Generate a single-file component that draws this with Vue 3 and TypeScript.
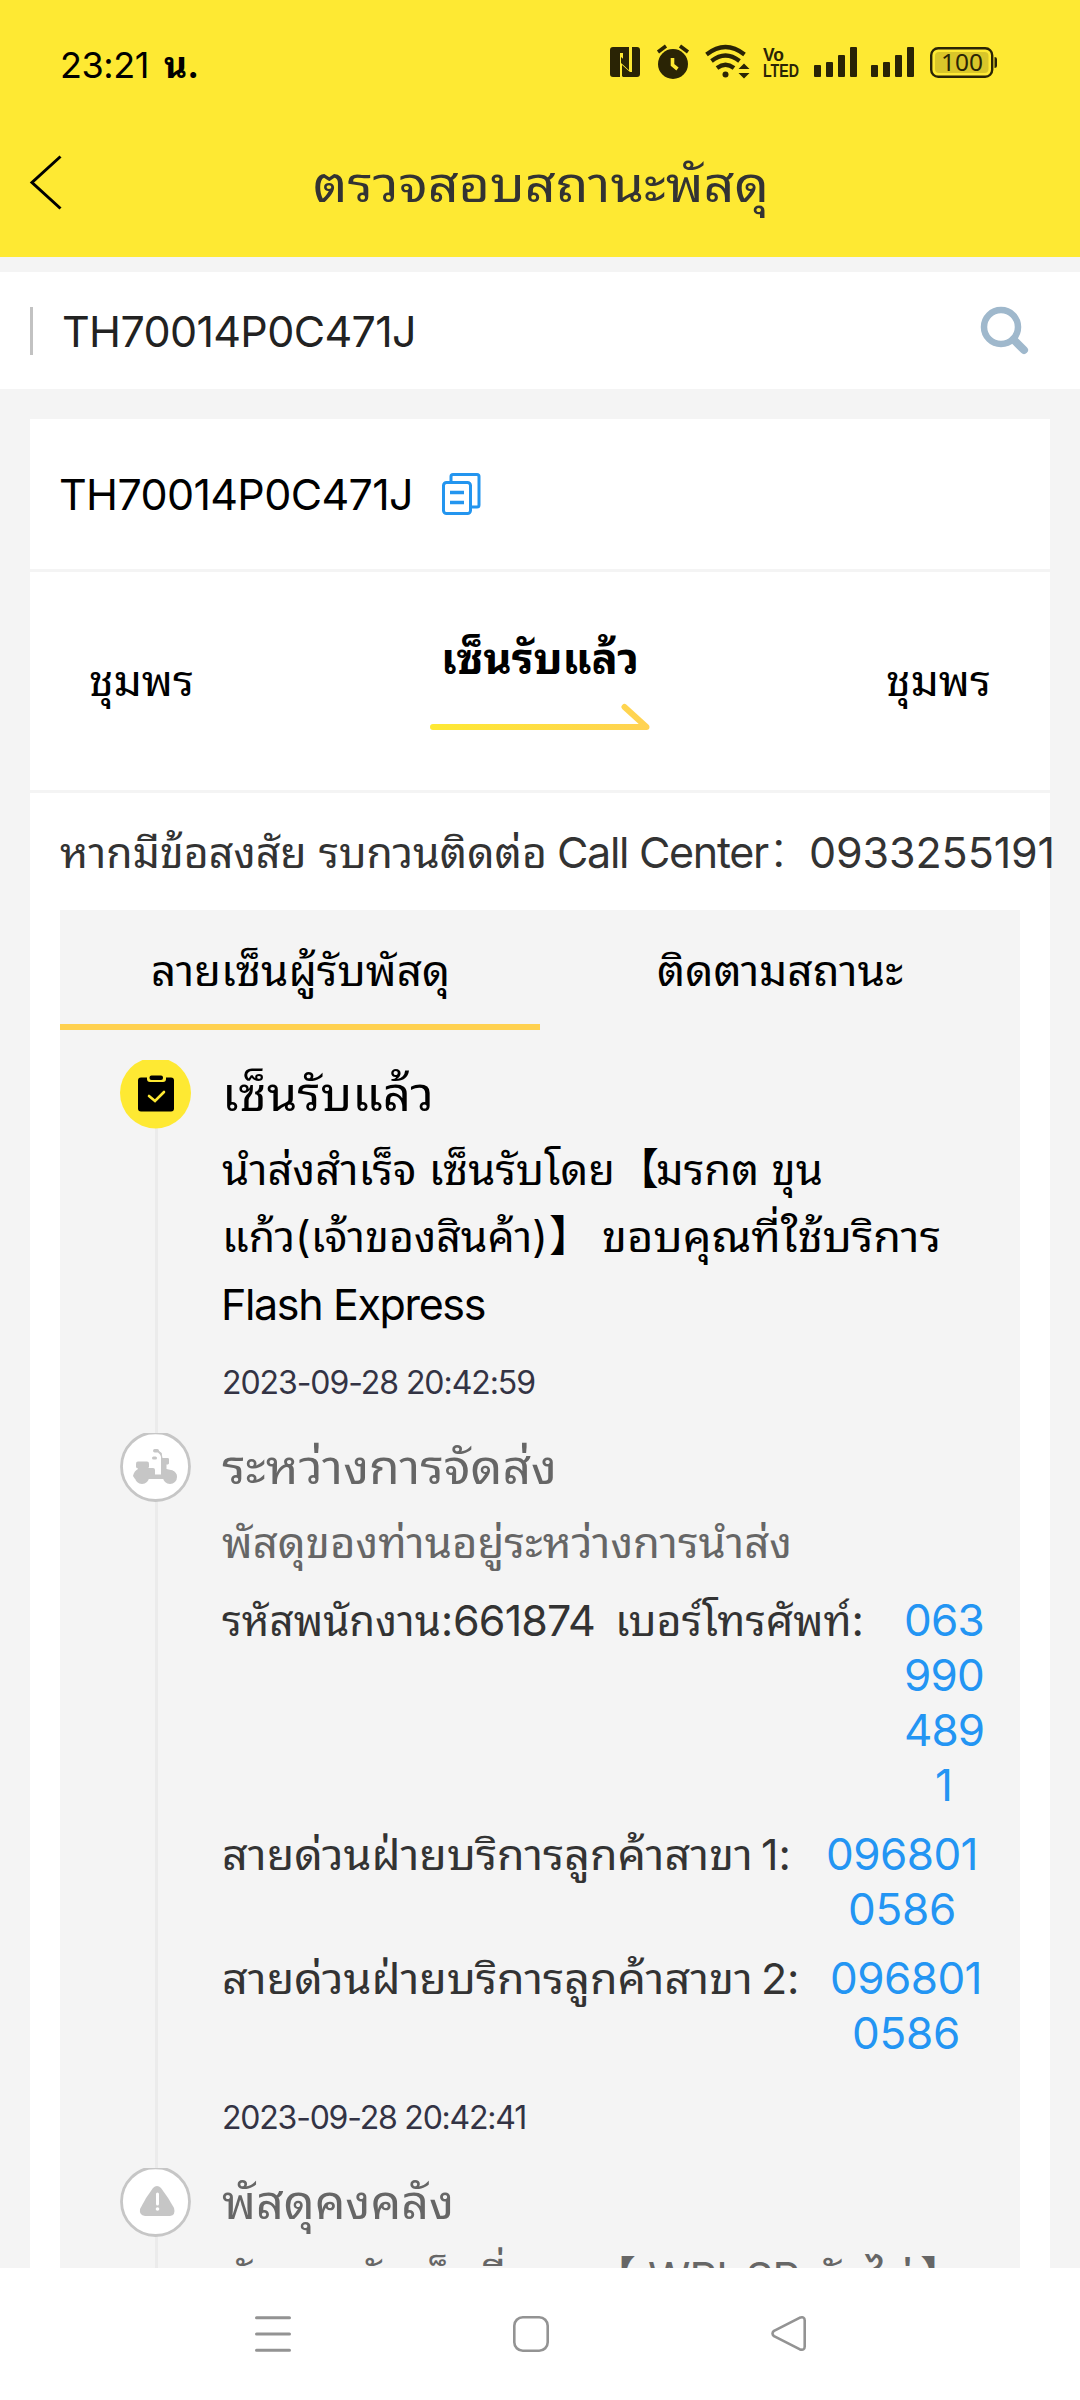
<script setup lang="ts">
interface Segment {
  text: string
  width: number
  gap?: number
}

interface Contact {
  label: Segment[]
  phone: Segment[]
  phoneGap: number
  phoneWidth: number
}

interface Step {
  kind: 'signed' | 'delivering' | 'warehouse'
  height: number
  title: Segment
  lines: Segment[][]
  contacts: Contact[]
  time?: Segment
}

// Makes the advance of an element equal the given width: Thai text is
// stretched, other text is tracked.
const vFit = {
  mounted(el: HTMLElement, binding: { value: number }) {
    el.style.letterSpacing = '0px'
    const natural = el.getBoundingClientRect().width
    if (/[\u0e00-\u0e7f]/.test(el.textContent ?? '')) {
      el.style.width = `${binding.value}px`
      el.style.transform = `scaleX(${binding.value / natural})`
      return
    }
    el.style.letterSpacing = '1px'
    const perPixel = el.getBoundingClientRect().width - natural
    el.style.letterSpacing = perPixel > 0 ? `${(binding.value - natural) / perPixel}px` : '0px'
  },
}

const trackingNo = 'TH70014P0C471J'

const steps: Step[] = [
  {
    kind: 'signed',
    height: 373,
    title: { text: 'เซ็นรับแล้ว', width: 212 },
    lines: [
      [
        { text: 'นำส่งสำเร็จ เซ็นรับโดย', width: 393 },
        { text: '【', width: 43, gap: 1 },
        { text: 'มรกต ขุน', width: 167, gap: -3 },
      ],
      [
        { text: 'แก้ว(เจ้าของสินค้า)', width: 326 },
        { text: '】', width: 43, gap: 1 },
        { text: 'ขอบคุณที่ใช้บริการ', width: 339, gap: 10 },
      ],
      [{ text: 'Flash Express', width: 264, gap: -1 }],
    ],
    contacts: [],
    time: { text: '2023-09-28 20:42:59', width: 313 },
  },
  {
    kind: 'delivering',
    height: 735,
    title: { text: 'ระหว่างการจัดส่ง', width: 335 },
    lines: [[{ text: 'พัสดุของท่านอยู่ระหว่างการนำส่ง', width: 570 }]],
    contacts: [
      {
        label: [
          { text: 'รหัสพนักงาน:', width: 231 },
          { text: '661874', width: 142 },
          { text: 'เบอร์โทรศัพท์:', width: 249, gap: 20 },
        ],
        phoneGap: 27,
        phoneWidth: 106,
        phone: [
          { text: '063', width: 80 },
          { text: '990', width: 80 },
          { text: '489', width: 80 },
          { text: '1', width: 18 },
        ],
      },
      {
        label: [
          { text: 'สายด่วนฝ่ายบริการลูกค้าสาขา', width: 531 },
          { text: '1:', width: 30, gap: 8 },
        ],
        phoneGap: 16,
        phoneWidth: 190,
        phone: [
          { text: '096801', width: 152 },
          { text: '0586', width: 108 },
        ],
      },
      {
        label: [
          { text: 'สายด่วนฝ่ายบริการลูกค้าสาขา', width: 531 },
          { text: '2:', width: 38, gap: 8 },
        ],
        phoneGap: 16,
        phoneWidth: 182,
        phone: [
          { text: '096801', width: 152 },
          { text: '0586', width: 108 },
        ],
      },
    ],
    time: { text: '2023-09-28 20:42:41', width: 304 },
  },
  {
    kind: 'warehouse',
    height: 120,
    title: { text: 'พัสดุคงคลัง', width: 232 },
    lines: [
      [
        { text: 'พัสดุถูกจัดเก็บที่สาขา', width: 370 },
        { text: '【', width: 43, gap: 1 },
        { text: 'WPI_SP-', width: 168, gap: 12 },
        { text: 'วังไผ่', width: 96, gap: 2 },
        { text: '】', width: 43, gap: 6 },
      ],
    ],
    contacts: [],
  },
]
</script>

<template>
  <div class="screen">
    <header class="top">
      <div class="status">
        <div class="clock">
          <span v-fit="89">23:21</span><span v-fit="35" class="clock-suffix">น.</span>
        </div>
        <svg class="status-icons" width="400" height="44" viewBox="604 40 400 44" fill="#2a2405">
          <path d="M613 47h16v23l-6-6v-11h-3v24h-7q-3 0-3-3v-24q0-3 3-3zM632 47h5q3 0 3 3v24q0 3-3 3h-14l-1-1v-11l8 7h2z" />
          <path d="M621 57l8 7v6l-8-7z" />
          <circle cx="673" cy="64" r="15" />
          <path d="M658 52l8-6M688 52l-8-6" stroke="#2a2405" stroke-width="3.6" fill="none" />
          <path d="M672.500 58v7l5 4" stroke="#fee933" stroke-width="3.600" fill="none" />
          <g fill="none" stroke="#2a2405" stroke-width="4.200">
            <path d="M706.500 54.500q19-15 38 0" />
            <path d="M711.500 61q14-11 28 0" />
            <path d="M717 68q8.500-6.500 17 0" />
          </g>
          <circle cx="725.500" cy="74.500" r="3" />
          <path d="M744 63.500l5.500 5.500h-11zM744 78.500l5.500-5.500h-11z" />
          <text x="763" y="60.500" class="volte" font-size="18" textLength="21" lengthAdjust="spacingAndGlyphs">Vo</text>
          <text x="763" y="76.500" class="volte" font-size="18" textLength="36" lengthAdjust="spacingAndGlyphs">LTED</text>
          <rect x="814" y="65" width="7" height="12" rx="1" />
          <rect x="826" y="62" width="7" height="15" rx="1" />
          <rect x="838" y="55" width="7" height="22" rx="1" />
          <rect x="850" y="47" width="7" height="30" rx="1" />
          <rect x="871" y="65" width="7" height="12" rx="1" />
          <rect x="883" y="62" width="7" height="15" rx="1" />
          <rect x="895" y="55" width="7" height="22" rx="1" />
          <rect x="907" y="47" width="7" height="30" rx="1" />
          <rect x="931.200" y="48.200" width="61" height="28.600" rx="7" fill="none" stroke="#2a2405" stroke-width="2.400" />
          <rect x="935" y="52" width="53.500" height="21" rx="4" fill="#d9c62a" />
          <path d="M994.500 57q2.500 0 2.500 2v7q0 2-2.500 2z" />
          <text x="941" y="71" class="battery" font-size="24" textLength="42" lengthAdjust="spacingAndGlyphs">100</text>
        </svg>
      </div>
      <div class="title-bar">
        <svg class="back" width="34" height="58" viewBox="0 0 34 58">
          <path d="M31.500 1.500L3 27.500L31.500 53.500" fill="none" stroke="#000" stroke-width="3" />
        </svg>
        <h1><span v-fit="456">ตรวจสอบสถานะพัสดุ</span></h1>
      </div>
    </header>

    <div class="search">
      <span class="caret"></span>
      <span v-fit="354" class="query">{{ trackingNo }}</span>
      <svg class="magnifier" width="50" height="50" viewBox="0 0 50 50" fill="none" stroke="#9fb8cc">
        <circle cx="21" cy="21" r="17" stroke-width="6.500" />
        <path d="M33.500 33.500L44 44" stroke-width="8" stroke-linecap="round" />
      </svg>
    </div>

    <main class="card">
      <div class="number-row">
        <span v-fit="354">{{ trackingNo }}</span>
        <svg class="copy" width="40" height="44" viewBox="0 0 40 44" fill="none" stroke="#2395ef" stroke-width="3" stroke-linejoin="round">
          <rect x="2.500" y="10.500" width="27" height="31" rx="3" />
          <path d="M10 10V4.500q0-2 2-2h24q2 0 2 2V33q0 2-2 2h-5" />
          <path d="M9 20.500h14M9 30.500h14" stroke-width="3.400" />
        </svg>
      </div>

      <div class="route">
        <span v-fit="105" class="place">ชุมพร</span>
        <div class="progress">
          <b><span v-fit="198">เซ็นรับแล้ว</span></b>
          <svg width="220" height="28" viewBox="0 0 220 28">
            <defs>
              <linearGradient id="arrow" gradientUnits="userSpaceOnUse" x1="0" y1="0" x2="220" y2="0">
                <stop offset="0" stop-color="#fee933" />
                <stop offset="1" stop-color="#ffd253" />
              </linearGradient>
            </defs>
            <path d="M3 24H216.500L194.500 4" fill="none" stroke="url(#arrow)" stroke-width="6" stroke-linecap="round" stroke-linejoin="round" />
          </svg>
        </div>
        <span v-fit="105" class="place">ชุมพร</span>
      </div>

      <p class="call">
        <span v-fit="487">หากมีข้อสงสัย รบกวนติดต่อ</span>
        <span v-fit="211" class="call-name">Call Center</span>
        <span v-fit="43" class="call-colon">：</span>
        <span v-fit="246" class="call-no">0933255191</span>
      </p>

      <section class="panel">
        <nav class="tabs">
          <a class="active"><span v-fit="299">ลายเซ็นผู้รับพัสดุ</span></a>
          <a><span v-fit="246">ติดตามสถานะ</span></a>
        </nav>

        <ol class="timeline">
          <li v-for="step in steps" :key="step.kind" :class="step.kind" :style="{ height: step.height + 'px' }">
            <div class="rail">
              <svg v-if="step.kind === 'signed'" width="72" height="70" viewBox="0 0 72 70">
                <circle cx="35.500" cy="33" r="35.500" fill="#fee933" />
                <rect x="18" y="17.500" width="36" height="34" rx="3" fill="#000" />
                <rect x="27" y="13" width="19" height="9" rx="3" fill="#fee933" />
                <rect x="29.500" y="15.500" width="13.500" height="4.500" rx="2" fill="#000" />
                <path d="M29 36l6 5 9-9" fill="none" stroke="#fee933" stroke-width="2.600" stroke-linecap="round" />
              </svg>
              <svg v-else-if="step.kind === 'delivering'" width="72" height="70" viewBox="0 0 72 70">
                <circle cx="35.500" cy="33.500" r="34" fill="#fff" stroke="#c6c6c6" stroke-width="2.800" />
                <path d="M27 0.500h17" stroke="#c6c6c6" stroke-width="1.500" />
                <g fill="#c6c6c6">
                  <circle cx="22" cy="44" r="7" />
                  <circle cx="50" cy="44" r="7" />
                  <rect x="16" y="28.500" width="13" height="7" rx="2" />
                  <path d="M18 35h15q2 0 2 2v4.500h6V24l-1.500-5 2 1 1 5h5q1.500 0 1.500 1v4.500l-1 1h-1.500v4.500q10 1 10.500 8l-6 2H15l-2-3q1-5 5-7z" />
                  <rect x="33" y="16" width="6" height="3.500" rx="1.700" />
                  <rect x="32" y="23.500" width="5" height="3" rx="1.500" />
                  <path d="M38 17l3.500 3v3l-4-4z" />
                </g>
              </svg>
              <svg v-else width="72" height="70" viewBox="0 0 72 70">
                <circle cx="35.500" cy="33.500" r="34" fill="#fff" stroke="#c6c6c6" stroke-width="2.800" />
                <path d="M27 0.500h17" stroke="#c6c6c6" stroke-width="1.500" />
                <path d="M33 20q4-4 8 0q7 9 13 20q2 7-4 8H25q-6-1-5-7q6-12 13-21z" fill="#c6c6c6" />
                <path d="M37.500 26v10" stroke="#fff" stroke-width="3" stroke-linecap="round" />
                <circle cx="37.500" cy="41" r="1.800" fill="#fff" />
              </svg>
            </div>

            <div class="detail">
              <h2><span v-fit="step.title.width">{{ step.title.text }}</span></h2>
              <div class="lines">
                <p v-for="(line, i) in step.lines" :key="i">
                  <span v-for="(seg, j) in line" :key="j" v-fit="seg.width" :style="{ marginLeft: (seg.gap ?? 0) + 'px' }">{{ seg.text }}</span>
                </p>
              </div>
              <div v-for="(contact, i) in step.contacts" :key="i" class="contact">
                <div class="contact-label">
                  <span v-for="(seg, j) in contact.label" :key="j" v-fit="seg.width" :style="{ marginLeft: (seg.gap ?? 0) + 'px' }">{{ seg.text }}</span>
                </div>
                <div class="phone" :style="{ marginLeft: contact.phoneGap + 'px', width: contact.phoneWidth + 'px' }">
                  <div v-for="(seg, j) in contact.phone" :key="j"><span v-fit="seg.width">{{ seg.text }}</span></div>
                </div>
              </div>
              <time v-if="step.time" :class="{ late: step.contacts.length > 0 }"><span v-fit="step.time.width">{{ step.time.text }}</span></time>
            </div>
          </li>
        </ol>
      </section>
    </main>

    <footer class="nav">
      <svg width="36" height="36" viewBox="0 0 36 36" fill="none" stroke="#939393" stroke-width="3" stroke-linecap="round">
        <path d="M1.500 1.700h33M1.500 18h33M1.500 34.300h33" />
      </svg>
      <svg width="36" height="36" viewBox="0 0 36 36" fill="none" stroke="#939393" stroke-width="2.600">
        <rect x="1.300" y="1.300" width="33.400" height="33.400" rx="8.500" />
      </svg>
      <svg width="36" height="36" viewBox="0 0 36 36" fill="none" stroke="#939393" stroke-width="2.600" stroke-linejoin="round">
        <path d="M28.500 1.800L3 14.800Q0 17.500 3 20.200L28.500 33.200Q33.700 35 33.700 30.500V4.500Q33.700 0 28.500 1.800z" />
      </svg>
    </footer>
  </div>
</template>

<style>
body {
  margin: 0;
  background: #f4f4f4;
}
</style>

<style scoped>
.screen {
  width: 1080px;
  height: 2400px;
  display: flex;
  flex-direction: column;
  overflow: hidden;
  background: #f4f4f4;
  color: #000;
  font-family: Inter, 'Noto Sans Thai Looped', 'Noto Sans Thai', 'Noto Sans', 'Noto Sans CJK SC', sans-serif;
  font-size: 43px;
}
.screen span {
  display: inline-block;
  white-space: pre;
  text-align: left;
  transform-origin: 0 50%;
}
h1,
h2,
p,
ol {
  margin: 0;
  padding: 0;
  font-weight: 400;
}
svg {
  display: block;
  flex: none;
}
.top {
  height: 257px;
  flex: none;
  background: #fee933;
}
.status {
  height: 124px;
  display: flex;
  justify-content: space-between;
  padding: 0 76px 0 60px;
  box-sizing: border-box;
}
.clock {
  padding-top: 41px;
  font-size: 36px;
  line-height: 48px;
  font-weight: 400;
}
.clock-suffix {
  margin-left: 15px;
  font-weight: 700;
}
.status-icons {
  margin-top: 40px;
}
.volte {
  font-family: 'Liberation Sans', sans-serif;
  font-weight: 700;
}
.battery {
  font-family: 'Noto Sans', sans-serif;
}
.title-bar {
  height: 120px;
  display: flex;
  align-items: center;
}
.back {
  margin: 0 0 0 29px;
}
h1 {
  flex: 1;
  margin-right: 61px;
  text-align: center;
  font-size: 50px;
  line-height: 120px;
  color: #333;
}
.search {
  flex: none;
  height: 117px;
  margin-top: 15px;
  padding: 0 50px 0 30px;
  display: flex;
  align-items: center;
  background: #fff;
  color: #222;
}
.caret {
  width: 3px;
  height: 48px;
  background: #c2c2c2;
}
.query {
  margin-left: 29px;
  line-height: 118px;
}
.magnifier {
  margin-left: auto;
}
.card {
  flex: 1;
  min-height: 0;
  margin: 30px 30px 0;
  background: #fff;
}
.number-row {
  height: 150px;
  display: flex;
  align-items: center;
  padding-left: 29px;
  border-bottom: 3px solid #f4f4f4;
}
.copy {
  margin-left: 28px;
}
.route {
  height: 218px;
  display: flex;
  justify-content: space-between;
  padding: 0 59px;
  border-bottom: 3px solid #f4f4f4;
}
.place {
  line-height: 216px;
}
.progress {
  display: flex;
  flex-direction: column;
  align-items: center;
  padding-top: 56px;
}
.progress b {
  line-height: 60px;
}
.progress svg {
  margin-top: 15px;
}
.call {
  height: 117px;
  padding-left: 30px;
  line-height: 119px;
  white-space: nowrap;
  font-size: 43px;
  color: #333;
  display: flex;
}
.call-name {
  margin-left: 10px;
}
.call-colon {
  font-family: 'Liberation Sans', 'Noto Sans CJK SC', sans-serif;
  font-weight: 300;
}
.call-no {
  margin-left: -2px;
}
.panel {
  margin: 0 30px;
  height: 1400px;
  background: #f4f4f4;
}
.tabs {
  display: flex;
  height: 120px;
}
.tabs a {
  flex: 1;
  box-sizing: border-box;
  text-align: center;
  line-height: 120px;
}
.tabs .active {
  border-bottom: 6px solid #ffd14f;
}
.timeline {
  list-style: none;
  padding: 30px 0 0 60px;
}
.timeline li {
  display: flex;
}
.rail {
  width: 72px;
  flex: none;
  background: linear-gradient(#ebebeb, #ebebeb) 35px 0 / 3px 100% no-repeat;
}
.detail {
  flex: 1;
  min-width: 0;
  padding-left: 30px;
}
h2 {
  font-size: 48px;
  line-height: 67px;
}
.lines {
  margin-top: 8.6px;
}
.lines p {
  height: 67.5px;
  line-height: 67px;
  white-space: nowrap;
  display: flex;
}
.delivering h2,
.warehouse h2,
.delivering .lines,
.warehouse .lines {
  color: #666;
}
.contact {
  display: flex;
  line-height: 55px;
  margin-top: 14px;
  color: #333;
}
.lines + .contact {
  margin-top: 16.5px;
}
.contact-label {
  display: flex;
  flex: none;
}
.phone {
  flex: none;
  text-align: center;
  color: #2395f3;
  font-size: 44px;
}
time {
  display: block;
  margin-top: 23px;
  font-size: 32px;
  line-height: 44px;
  color: #333344;
}
time.late {
  margin-top: 35px;
}
.nav {
  position: relative;
  z-index: 1;
  flex: none;
  height: 132px;
  background: #fff;
  display: flex;
  align-items: center;
  gap: 222px;
  padding: 0 0 0 255px;
  box-sizing: border-box;
}
</style>
